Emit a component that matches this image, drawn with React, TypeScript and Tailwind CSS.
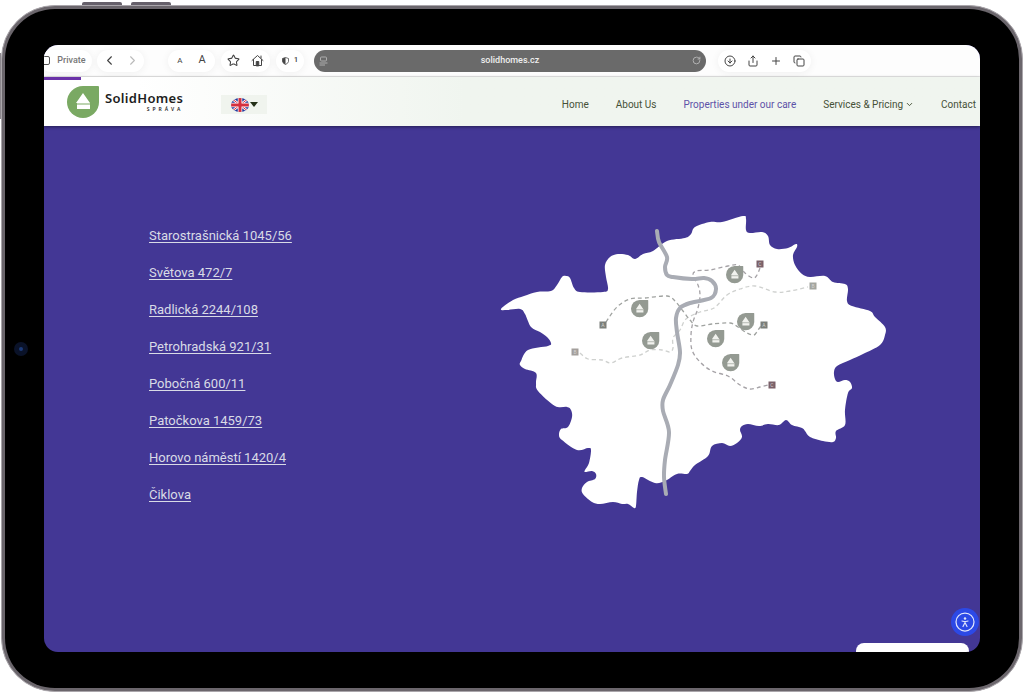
import type { ReactNode } from 'react'
import {
  ArrowDownCircle,
  ChevronDown,
  ChevronLeft,
  ChevronRight,
  Copy,
  Plus,
  RotateCw,
  Share,
  Star,
} from 'lucide-react'

type Point = [number, number]

const addresses = [
  'Starostrašnická 1045/56',
  'Světova 472/7',
  'Radlická 2244/108',
  'Petrohradská 921/31',
  'Pobočná 600/11',
  'Patočkova 1459/73',
  'Horovo náměstí 1420/4',
  'Čiklova',
]

const cityOutline: Point[] = [
  [501, 309], [513, 300], [524, 296], [537, 292], [551, 291], [557, 285], [562, 277], [566, 276], [570, 278], [574, 288],
  [580, 292], [603, 292], [608, 289], [606, 277], [605, 265], [610, 257], [618, 254], [628, 255], [635, 259],
  [643, 254], [653, 251], [667, 241], [685, 238], [691, 234], [695, 227], [710, 222], [722, 222], [743, 216],
  [746, 219], [746, 230], [750, 233], [762, 232], [768, 236], [770, 245], [777, 249], [788, 248], [796, 244],
  [797, 247], [793, 255], [795, 265], [802, 274], [810, 277], [825, 276], [833, 282], [845, 284], [848, 289],
  [847, 301], [852, 306], [870, 311], [875, 317], [885, 327], [885, 335], [880, 345], [863, 354], [850, 360], [837, 366],
  [834, 372], [835, 379], [838, 382], [845, 380], [850, 382], [852, 388], [848, 393], [845, 410], [845, 425],
  [836, 431], [836, 438], [833, 442], [823, 441], [810, 437], [805, 431], [802, 428], [792, 425], [786, 420],
  [779, 425], [768, 424], [759, 426], [748, 424], [742, 426], [740, 430], [742, 437], [737, 443], [730, 446],
  [722, 443], [712, 446], [708, 456], [695, 465], [690, 471], [687, 474], [677, 474], [665, 481], [655, 483],
  [642, 477], [639, 480], [637, 492], [636, 506], [634, 508], [628, 504], [622, 504], [613, 502], [600, 504],
  [592, 502], [583, 494], [582, 488], [587, 482], [595, 479], [596, 474], [592, 471], [585, 472], [585, 470],
  [589, 463], [591, 450], [588, 448], [577, 450], [562, 440], [559, 435], [561, 429], [568, 427], [572, 417],
  [571, 410], [567, 407], [555, 406], [538, 391], [536, 383], [536, 373], [525, 369], [520, 365], [521, 361],
  [528, 350], [548, 346], [551, 343], [547, 337], [540, 332], [531, 327], [525, 314], [520, 309], [507, 310],
]

const river: Point[] = [
  [657, 231], [659, 242], [667, 257], [665, 267], [667, 275], [673, 277], [692, 279], [704, 278], [712, 281],
  [716, 289], [711, 298], [690, 303], [680, 308], [676, 318], [677, 332], [680, 352], [678, 365], [670, 385],
  [663, 400], [663, 411], [669, 432], [665, 460], [664, 477], [666, 494],
]

const lineA: Point[] = [
  [606, 322], [617, 307], [630, 299], [645, 298], [667, 296], [675, 301], [683, 311], [690, 320], [697, 326],
  [712, 324], [730, 323], [738, 327], [747, 333], [754, 335], [758, 330], [761, 326],
]

const lineB: Point[] = [
  [580, 353], [588, 359], [602, 360], [611, 363], [622, 358], [640, 355], [650, 350], [662, 350], [670, 352],
  [673, 348], [673, 338], [680, 330], [686, 319], [700, 312], [714, 308], [727, 295], [740, 289], [755, 286],
  [775, 292], [790, 291], [808, 287],
]

const lineC: Point[] = [
  [760, 268], [757, 275], [753, 278], [745, 273], [738, 265], [728, 266], [710, 270], [696, 271], [693, 276],
  [698, 285], [700, 295], [698, 308], [693, 322], [691, 335], [692, 350], [700, 362], [712, 371], [728, 376],
  [740, 385], [750, 389], [760, 387], [768, 385],
]

const pins: Point[] = [[640, 309], [651, 341], [735, 275], [746, 322], [716, 339], [731, 363]]

const stations = [
  { line: 'A', x: 603, y: 325, color: '#7b7f7a' },
  { line: 'B', x: 575, y: 352, color: '#a39f9c' },
  { line: 'C', x: 760, y: 264, color: '#7a6069' },
  { line: 'B', x: 813, y: 286, color: '#a3a59f' },
  { line: 'A', x: 764, y: 325, color: '#7b7f7a' },
  { line: 'C', x: 772, y: 385, color: '#7a6069' },
]

// Catmull-Rom spline through the points, written as cubic beziers
function smoothPath(points: Point[], closed = false) {
  const n = points.length
  const at = (i: number) => (closed ? points[(i + n) % n] : points[Math.max(0, Math.min(n - 1, i))])
  let d = `M${points[0].join(' ')}`
  for (let i = 0; i < (closed ? n : n - 1); i++) {
    const [a, b, c, e] = [at(i - 1), at(i), at(i + 1), at(i + 2)]
    d += `C${b[0] + (c[0] - a[0]) / 6} ${b[1] + (c[1] - a[1]) / 6} ${c[0] - (e[0] - b[0]) / 6} ${c[1] - (e[1] - b[1]) / 6} ${c[0]} ${c[1]}`
  }
  return closed ? d + 'Z' : d
}

function PinShape({ color, icon }: { color: string; icon: string }) {
  return (
    <>
      <path d="M16 0H31Q32 0 32 1V16A16 16 0 1 1 16 0Z" fill={color} />
      <path d="M16 7L23 17V23H10V17H9Z" fill={icon} />
      <path d="M9 18H23" stroke={color} strokeWidth="1.2" />
    </>
  )
}

function CityMap() {
  return (
    <svg viewBox="500 214 388 296" className="w-[388px] max-w-full" role="img" aria-label="Map of Prague">
      <path d={smoothPath(cityOutline, true)} fill="#fff" />
      <g fill="none" strokeWidth="1.3" strokeDasharray="4 3">
        <path d={smoothPath(lineB)} stroke="#cfd1cf" />
        <path d={smoothPath(lineA)} stroke="#a0a3a0" />
        <path d={smoothPath(lineC)} stroke="#a5a2a6" />
      </g>
      <path d={smoothPath(river)} fill="none" stroke="#a9acb4" strokeWidth="4" strokeLinecap="round" />
      {pins.map(([x, y]) => (
        <g key={`${x}-${y}`} transform={`translate(${x - 9} ${y - 9}) scale(0.54)`}>
          <PinShape color="#949a92" icon="#f1f2ee" />
        </g>
      ))}
      {stations.map((s) => (
        <g key={`${s.x}-${s.y}`}>
          <rect x={s.x - 3.5} y={s.y - 3.5} width="7" height="7" fill={s.color} />
          <text x={s.x} y={s.y + 2} textAnchor="middle" fontSize="5" fill="#d5d3d2">{s.line}</text>
        </g>
      ))}
    </svg>
  )
}

function Flag() {
  return (
    <svg viewBox="0 0 36 28" className="h-[14px] w-[18px]" aria-hidden="true">
      <clipPath id="flag">
        <ellipse cx="18" cy="14" rx="18" ry="14" />
      </clipPath>
      <g clipPath="url(#flag)">
        <path d="M0 0H36V28H0Z" fill="#233a9c" />
        <path d="M0 0L36 28M36 0L0 28" stroke="#fff" strokeWidth="5" />
        <path d="M0 0L36 28M36 0L0 28" stroke="#d5303e" strokeWidth="2" />
        <path d="M18 0V28M0 14H36" stroke="#fff" strokeWidth="9" />
        <path d="M18 0V28M0 14H36" stroke="#d5303e" strokeWidth="6" />
      </g>
    </svg>
  )
}

function HomeIcon() {
  return (
    <svg viewBox="0 0 26 26" className="size-[13px]" fill="none" stroke="currentColor" strokeWidth="2" strokeLinejoin="round" strokeLinecap="round">
      <path d="M2 13L13 3L24 13M5 11V23H21V11M20 8V4" />
      <path d="M10.500 23V15H15.500V23Z" fill="currentColor" />
    </svg>
  )
}

function Pill({ children, className }: { children: ReactNode; className: string }) {
  return (
    <div className={`flex h-[22px] shrink-0 items-center justify-center rounded-full bg-white shadow-[0_1px_8px_rgba(0,0,0,0.06)] ${className}`}>
      {children}
    </div>
  )
}

function Toolbar() {
  return (
    <div className="flex h-8 items-center border-b border-[#e9e9e9] bg-[#fdfdfd] text-[#444]">
      <Pill className="-ml-1 w-[52px] gap-[7px]">
        <span className="-ml-1 h-[9px] w-2 rounded-xs border border-[#555]" />
        <span className="text-[9px] font-medium text-[#777]">Private</span>
      </Pill>
      <Pill className="ml-[5px] w-[47px] gap-2">
        <button aria-label="Back"><ChevronLeft className="size-[15px]" strokeWidth={1.8} /></button>
        <button aria-label="Forward" className="text-[#bbb]"><ChevronRight className="size-[15px]" strokeWidth={1.8} /></button>
      </Pill>
      <Pill className="ml-6 w-[47px] gap-4">
        <button aria-label="Smaller text" className="text-[8px]">A</button>
        <button aria-label="Larger text" className="text-[11px]">A</button>
      </Pill>
      <Pill className="ml-[6px] w-[49px] gap-[11px]">
        <button aria-label="Bookmark"><Star className="size-[13px]" strokeWidth={2} /></button>
        <button aria-label="Start page"><HomeIcon /></button>
      </Pill>
      <Pill className="ml-[6px] w-7 gap-[5px]">
        <svg viewBox="0 0 14 16" className="h-2 w-[7px]" aria-hidden="true">
          <path d="M7 1L13 3V9Q12 13 7 15Q2 13 1 9V3Z" fill="none" stroke="#444" strokeWidth="1.500" />
          <path d="M7 1V15Q2 13 1 9V3Z" fill="#444" />
        </svg>
        <span className="text-[7px] font-semibold">1</span>
      </Pill>
      <div className="ml-[10px] flex h-[22px] min-w-0 flex-1 items-center rounded-full bg-[#6a6a6a] px-[5px] text-[#b5b5b5]">
        <svg viewBox="0 0 18 20" className="h-[10px] w-[9px]" fill="none" stroke="currentColor" strokeWidth="1.800" aria-hidden="true">
          <rect x="3" y="2" width="12" height="8" rx="2" />
          <path d="M1 14H17M1 18H12" />
        </svg>
        <input
          aria-label="Address"
          defaultValue="solidhomes.cz"
          className="min-w-0 flex-1 bg-transparent text-center text-[9px] font-medium text-[#eee] outline-none"
        />
        <button aria-label="Reload"><RotateCw className="size-[9px]" strokeWidth={2.5} /></button>
      </div>
      <Pill className="mr-[169px] ml-3 w-[93px] gap-[11px]">
        <button aria-label="Downloads"><ArrowDownCircle className="size-3" strokeWidth={2} /></button>
        <button aria-label="Share"><Share className="size-3" strokeWidth={2} /></button>
        <button aria-label="New tab"><Plus className="size-3" strokeWidth={2} /></button>
        <button aria-label="Tabs"><Copy className="size-3" strokeWidth={2} /></button>
      </Pill>
    </div>
  )
}

function Header() {
  return (
    <header className="relative z-10 flex h-[49px] items-center bg-linear-to-r from-white from-10% to-[#f0f5ef] to-45% pr-1 pl-[23px] shadow-[0_1px_3px_rgba(0,0,0,0.45)]">
      <div className="absolute top-0 left-0 h-[3px] w-[37px] bg-[#6a32a8]" />
      <a href="#" className="flex shrink-0 items-center gap-[6px] text-[#1d1d1d]">
        <svg viewBox="0 0 32 32" className="size-8" aria-hidden="true">
          <PinShape color="#7aa963" icon="#fff" />
        </svg>
        <span className="flex flex-col items-end font-['Noto_Sans',sans-serif]">
          <span className="text-[13px] leading-[14px] font-semibold tracking-wide">SolidHomes</span>
          <span className="text-[5px] leading-[8px] font-semibold tracking-[3px]">SPRÁVA</span>
        </span>
      </a>
      <button aria-label="Language: English" className="mt-[6px] ml-[38px] flex h-[19px] w-[46px] shrink-0 items-center justify-center gap-px bg-[#f0f4ee]">
        <Flag />
        <svg viewBox="0 0 8 5" className="h-[5px] w-2" aria-hidden="true"><path d="M0 0H8L4 5Z" fill="#243018" /></svg>
      </button>
      <nav className="mt-[6px] ml-auto flex items-center gap-[27px] text-[10px] whitespace-nowrap text-[#465137]">
        <a href="#">Home</a>
        <a href="#">About Us</a>
        <a href="#" className="text-[#5d52a8]">Properties under our care</a>
        <a href="#" className="flex items-center gap-[2px]">
          Services &amp; Pricing <ChevronDown className="size-[9px]" strokeWidth={2.5} />
        </a>
        <a href="#">Contact</a>
      </nav>
    </header>
  )
}

export default function App() {
  return (
    <div className="relative flex min-h-screen flex-col bg-white pt-[2px] pb-[6px] font-[Roboto,sans-serif]">
      {/* Volume buttons */}
      <div className="flex h-[3px] gap-[9px] pl-[82px]">
        <span className="w-10 rounded-t-xs bg-[#66606a]" />
        <span className="w-10 rounded-t-xs bg-[#66606a]" />
      </div>
      <span className="absolute top-[53px] left-0 h-[66px] w-px bg-[#8d888e]" />

      <div className="mx-px flex flex-1 rounded-[54px] border border-[#aaa6ab] bg-[#6b666c] p-[3px]">
        <div className="flex min-w-0 flex-1 rounded-[50px] bg-black pt-9 pr-[39px] pb-9">
          <div className="flex w-[39px] shrink-0 items-center justify-center pr-2">
            <span className="flex size-[14px] items-center justify-center rounded-full bg-[#0a1228]">
              <span className="size-1 rounded-full bg-[#1c3a78]" />
            </span>
          </div>

          <div className="relative flex min-w-0 flex-1 flex-col overflow-hidden rounded-[14px] bg-[#433795]">
            <Toolbar />
            <Header />
            <main className="flex flex-1 items-start justify-between gap-4 pt-[88px] pr-[92px] pb-[140px] pl-[105px]">
              <ul className="flex shrink-0 flex-col gap-[17px] pt-3 text-[13px] leading-5 text-[#d9dbe6]">
                {addresses.map((address) => (
                  <li key={address}>
                    <a href="#" className="underline underline-offset-2">{address}</a>
                  </li>
                ))}
              </ul>
              <CityMap />
            </main>

            <button aria-label="Accessibility" className="absolute right-px bottom-4 flex size-7 items-center justify-center rounded-full bg-[#2c49e6]">
              <svg viewBox="0 0 40 40" className="size-5" fill="none" stroke="#dfe4fb" strokeLinecap="round">
                <circle cx="20" cy="20" r="18" strokeWidth="2.500" />
                <circle cx="20" cy="13" r="2.500" fill="#dfe4fb" stroke="none" />
                <path d="M14 18L18 19H22L26 18M20 19V23M16 29L19 23H21L24 29" strokeWidth="2.400" />
              </svg>
            </button>
            <div className="absolute right-[11px] bottom-0 h-[9px] w-[113px] rounded-t-lg bg-white" />
          </div>
        </div>
      </div>
    </div>
  )
}
